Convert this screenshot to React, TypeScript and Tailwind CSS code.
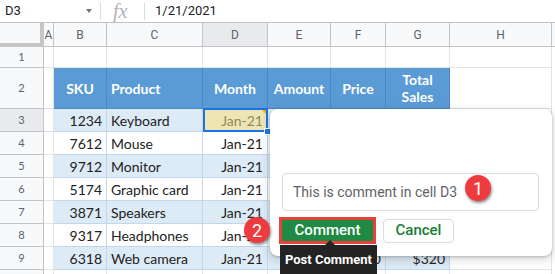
import React from "react";

const data = [
  ["1234", "Keyboard", "Jan-21", "", "", ""],
  ["7612", "Mouse", "Jan-21", "", "", ""],
  ["9712", "Monitor", "Jan-21", "", "", ""],
  ["5174", "Graphic card", "Jan-21", "", "", ""],
  ["3871", "Speakers", "Jan-21", "", "", ""],
  ["9317", "Headphones", "Jan-21", "", "", ""],
  ["6318", "Web camera", "Jan-21", "", "$80", "$320"],
];

const grid = "border-r border-b border-[#e2e3e3]";
const tb = "border-r border-b border-[#c3d6ea]";

function RowHead({ n, sel }: { n?: number; sel?: boolean }) {
  return (
    <div
      className={`w-[44px] shrink-0 flex items-center justify-center border-r border-b border-[#c4c4c4] text-[11px] text-[#5f6368] ${
        sel ? "bg-[#e8eaed]" : "bg-[#f8f9fa]"
      }`}
    >
      {n}
    </div>
  );
}

function DataRow({ n, d, blue, sel }: { n: number; d: string[]; blue: boolean; sel?: boolean }) {
  const bg = blue ? "bg-[#ddebf7]" : "bg-white";
  return (
    <div className="flex h-[23px] shrink-0">
      <RowHead n={n} sel={sel} />
      <div className={`w-[10px] shrink-0 ${grid}`} />
      <div className={`w-[53px] shrink-0 ${bg} ${tb} flex items-center justify-end pr-[4px]`}>{d[0]}</div>
      <div className={`w-[96px] shrink-0 ${bg} ${tb} flex items-center pl-[4px]`}>{d[1]}</div>
      {sel ? (
        <div className={`w-[65px] shrink-0 relative bg-[#ede6b2] ${tb} flex items-center justify-end pr-[4px] text-[#8f8762]`}>
          {d[2]}
          <div className="absolute left-[0px] top-[-1px] right-[-1px] bottom-[-1px] border-2 border-[#1a73e8]" />
          <div className="absolute right-[1px] top-[1px] w-0 h-0 border-l-[4px] border-l-transparent border-t-[4px] border-t-[#f9ab00]" />
          <div className="absolute right-[-4px] bottom-[-4px] w-[7px] h-[7px] bg-[#1a73e8] border border-white" />
        </div>
      ) : (
        <div className={`w-[65px] shrink-0 ${bg} ${tb} flex items-center justify-end pr-[4px]`}>{d[2]}</div>
      )}
      <div className={`w-[63px] shrink-0 ${bg} ${tb} flex items-center justify-end pr-[4px]`}>{d[3]}</div>
      <div className={`w-[55px] shrink-0 ${bg} ${tb} flex items-center justify-end pr-[4px]`}>{d[4]}</div>
      <div className={`w-[64px] shrink-0 ${bg} ${tb} flex items-center justify-end pr-[4px]`}>{d[5]}</div>
      <div className={`w-[102px] shrink-0 ${grid}`} />
      <div className="w-[3px] shrink-0" />
    </div>
  );
}

function EmptyRow({ n, h }: { n?: number; h: string }) {
  return (
    <div className={`flex ${h} shrink-0`}>
      <RowHead n={n} />
      <div className={`w-[10px] shrink-0 ${grid}`} />
      <div className={`w-[53px] shrink-0 ${grid}`} />
      <div className={`w-[96px] shrink-0 ${grid}`} />
      <div className={`w-[65px] shrink-0 ${grid}`} />
      <div className={`w-[63px] shrink-0 ${grid}`} />
      <div className={`w-[55px] shrink-0 ${grid}`} />
      <div className={`w-[64px] shrink-0 ${grid}`} />
      <div className={`w-[102px] shrink-0 ${grid}`} />
      <div className="w-[3px] shrink-0" />
    </div>
  );
}

export default function App() {
  const hb = "bg-[#5b9bd5] border-r border-b border-[#4a89c8] flex items-center justify-center text-white font-bold";
  const ch = "shrink-0 flex items-center justify-center border-r border-b border-[#c4c4c4] text-[12px] text-[#5f6368]";
  return (
    <div className="relative w-[555px] h-[274px] overflow-hidden bg-white font-['Lato',sans-serif] text-[14px] text-[#222222]">
      {/* formula bar */}
      <div className="flex items-center h-[23px] border-b border-[#c4c4c4] font-['Roboto',sans-serif] text-[13px] text-[#202124]">
        <div className="w-[100px] shrink-0 flex items-center pl-[5px] pr-[8px]">
          <span className="flex-1">D3</span>
          <span className="w-0 h-0 border-l-[3px] border-r-[3px] border-t-[4px] border-l-transparent border-r-transparent border-t-[#757575]" />
        </div>
        <div className="w-px h-[17px] bg-[#dadce0]" />
        <div className="w-[43px] shrink-0 flex items-center pl-[12px] font-['Liberation_Serif',serif] italic text-[20px] text-[#b0b3b8] leading-none">
          fx
        </div>
        <div className="w-px h-[17px] bg-[#dadce0]" />
        <div className="pl-[10px]">1/21/2021</div>
      </div>

      {/* column header row */}
      <div className="flex h-[24px] font-['Roboto',sans-serif]">
        <div className="w-[44px] shrink-0 bg-[#f8f9fa] border-r-4 border-b-4 border-[#c6c6c6]" />
        <div className={`w-[10px] bg-[#f8f9fa] ${ch}`}>A</div>
        <div className={`w-[53px] bg-[#f8f9fa] ${ch}`}>B</div>
        <div className={`w-[96px] bg-[#f8f9fa] ${ch}`}>C</div>
        <div className={`w-[65px] bg-[#e8eaed] ${ch}`}>D</div>
        <div className={`w-[63px] bg-[#f8f9fa] ${ch}`}>E</div>
        <div className={`w-[55px] bg-[#f8f9fa] ${ch}`}>F</div>
        <div className={`w-[64px] bg-[#f8f9fa] ${ch}`}>G</div>
        <div className={`w-[102px] bg-[#f8f9fa] ${ch}`}>H</div>
        <div className="w-[3px] shrink-0 bg-[#f8f9fa] border-b border-[#c4c4c4]" />
      </div>

      <EmptyRow n={1} h="h-[21px]" />

      {/* row 2 headers */}
      <div className="flex h-[41px] shrink-0 text-[14px]">
        <RowHead n={2} />
        <div className={`w-[10px] shrink-0 ${grid}`} />
        <div className={`w-[53px] shrink-0 ${hb}`}>SKU</div>
        <div className={`w-[96px] shrink-0 ${hb} !justify-start pl-[4px]`}>Product</div>
        <div className={`w-[65px] shrink-0 ${hb}`}>Month</div>
        <div className={`w-[63px] shrink-0 ${hb}`}>Amount</div>
        <div className={`w-[55px] shrink-0 ${hb}`}>Price</div>
        <div className={`w-[64px] shrink-0 ${hb} text-center leading-[17px]`}>
          Total
          <br />
          Sales
        </div>
        <div className={`w-[102px] shrink-0 ${grid}`} />
        <div className="w-[3px] shrink-0" />
      </div>

      {data.map((d, i) => (
        <DataRow key={i} n={i + 3} d={d} blue={i % 2 === 0} sel={i === 0} />
      ))}
      <EmptyRow h="h-[23px]" />

      {/* comment card */}
      <div className="absolute left-[270px] top-[109px] w-[282px] h-[147px] bg-white rounded-[8px] shadow-[0_1px_3px_rgba(60,64,67,0.3),0_3px_8px_2px_rgba(60,64,67,0.15)] flex flex-col pl-[12px] pt-[64px] font-['Roboto',sans-serif]">
        <div className="w-[257px] h-[38px] border border-[#dadce0] rounded-[4px] flex items-center pl-[10px] text-[14px] text-[#5f6368]">
          This is comment in cell D3
        </div>
        <div className="flex items-center mt-[6px] -ml-[3px]">
          <div className="border-[3px] border-[#e8403b]">
            <div className="w-[91px] h-[21px] bg-[#1e8a44] flex items-center justify-center text-white font-medium text-[15px]">
              Comment
            </div>
          </div>
          <div className="ml-[7px] w-[71px] h-[24px] border border-[#dadce0] rounded-[4px] flex items-center justify-center text-[#188038] font-medium text-[15px]">
            Cancel
          </div>
        </div>
      </div>

      {/* tooltip */}
      <div className="absolute left-[325px] top-[240px] w-0 h-0 border-l-[5px] border-r-[5px] border-b-[5px] border-l-transparent border-r-transparent border-b-[#232323]" />
      <div className="absolute left-[280px] top-[245px] w-[97px] h-[30px] bg-[#232323] flex items-center justify-center text-white font-bold text-[13px] font-['Roboto',sans-serif]">
        Post Comment
      </div>

      {/* badges */}
      <div className="absolute left-[465px] top-[175px] w-[26px] h-[26px] rounded-full bg-[#ee3b3f] shadow-[1px_2px_3px_rgba(0,0,0,0.45)] flex items-center justify-center text-white text-[18px] font-['Roboto',sans-serif]">
        1
      </div>
      <div className="absolute left-[244px] top-[217px] w-[26px] h-[26px] rounded-full bg-[#ee3b3f] shadow-[1px_2px_3px_rgba(0,0,0,0.45)] flex items-center justify-center text-white text-[18px] font-['Roboto',sans-serif]">
        2
      </div>
    </div>
  );
}
